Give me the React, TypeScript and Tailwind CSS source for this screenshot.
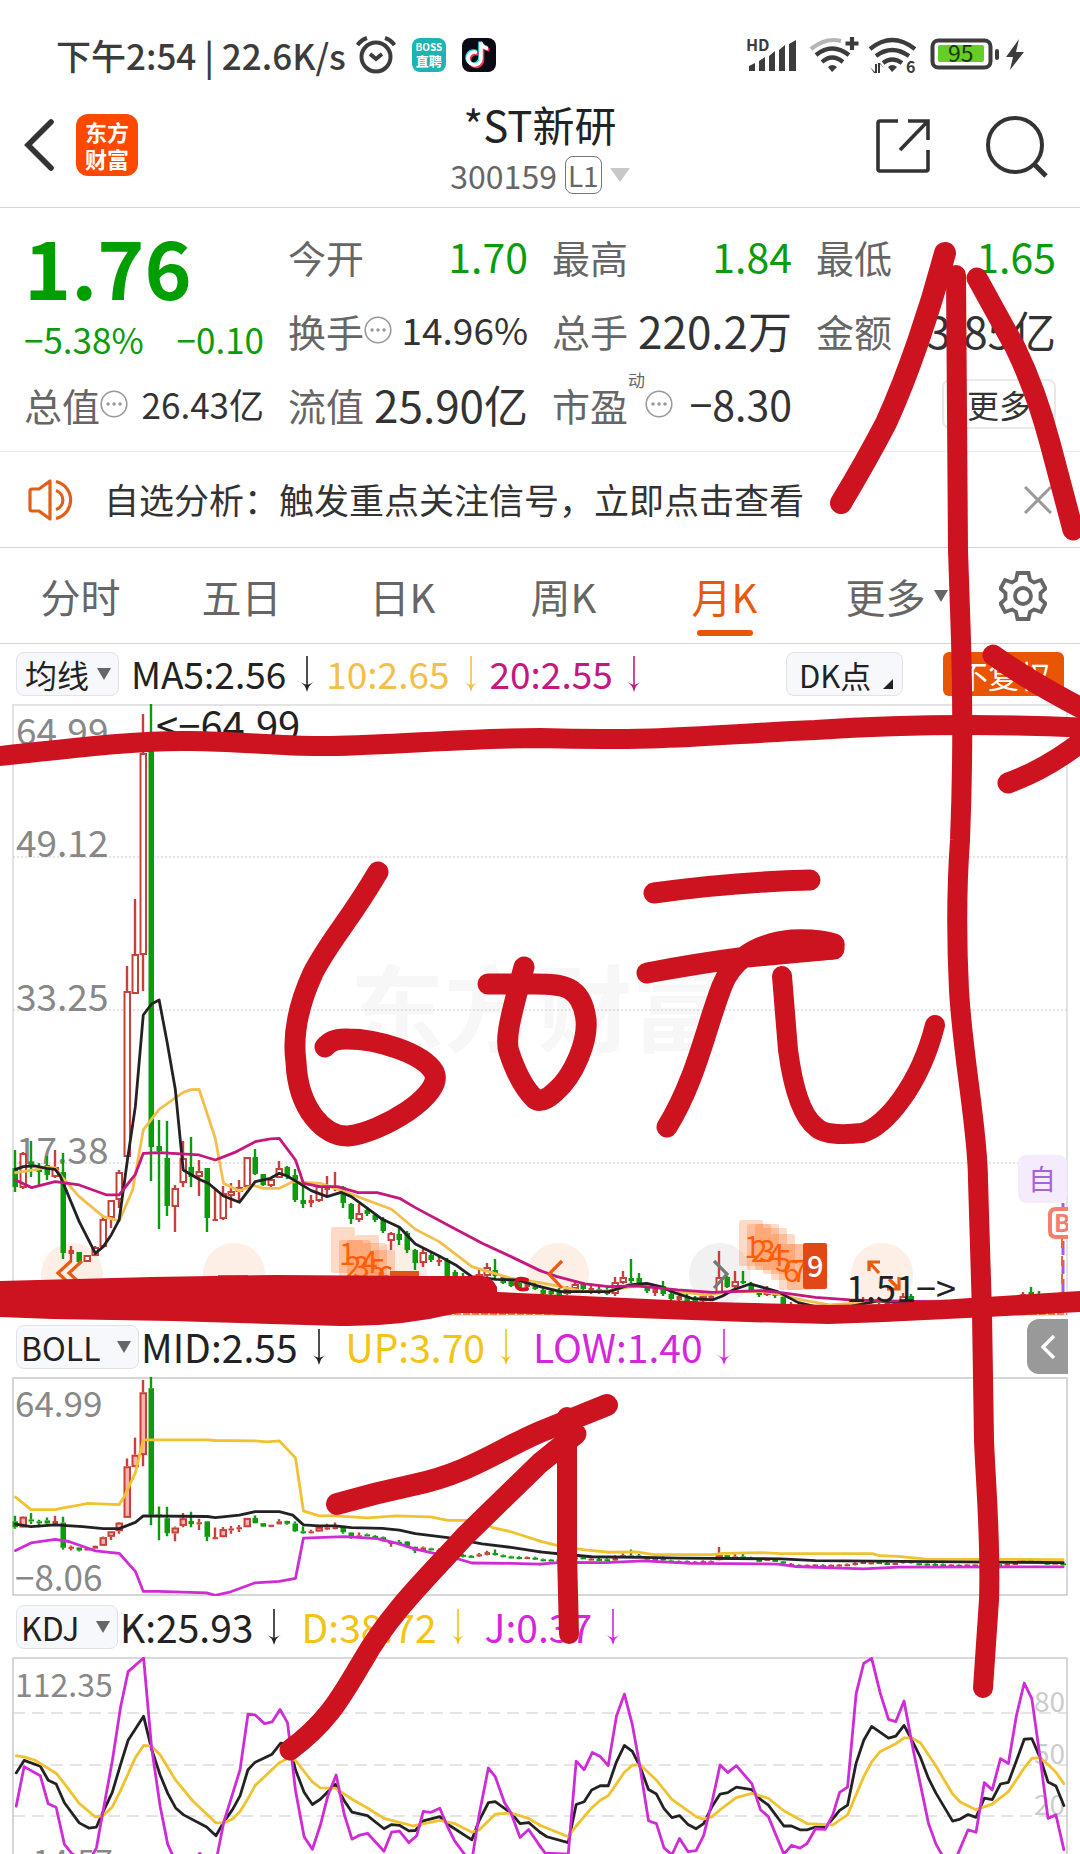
import type { ReactNode } from 'react';

type Candle = [number, number, number, number, 'r' | 'g'];

const RED = '#c9403a';
const GREEN = '#0a9c0a';

// high, body top, body bottom, low (in chart units), direction
const candles: Candle[] = [
  [446, 464, 483, 488, 'g'], [448, 449, 484, 485, 'r'], [437, 458, 463, 473, 'g'], [459, 464, 468, 483, 'g'],
  [452, 461, 471, 476, 'g'], [446, 463, 473, 474, 'r'], [449, 468, 549, 555, 'g'], [542, 546, 550, 558, 'r'],
  [548, 548, 558, 561, 'g'], [551, 551, 558, 558, 'r'], [542, 543, 552, 552, 'r'], [513, 515, 543, 543, 'r'],
  [496, 496, 514, 524, 'r'], [466, 468, 496, 504, 'r'], [262, 287, 453, 453, 'r'], [195, 250, 290, 290, 'r'],
  [10, 49, 251, 287, 'r'], [0, 36, 443, 477, 'g'], [416, 442, 447, 525, 'g'], [417, 454, 502, 512, 'g'],
  [481, 484, 503, 528, 'r'], [437, 454, 479, 483, 'r'], [433, 463, 473, 483, 'g'], [456, 467, 473, 492, 'r'],
  [464, 464, 514, 528, 'g'], [484, 515, 516, 517, 'r'], [482, 489, 515, 516, 'r'], [479, 487, 492, 504, 'r'],
  [476, 483, 488, 498, 'r'], [453, 453, 483, 483, 'r'], [445, 453, 470, 471, 'g'], [470, 470, 481, 482, 'g'],
  [475, 475, 482, 483, 'r'], [457, 464, 474, 474, 'r'], [462, 463, 472, 475, 'g'], [465, 471, 496, 498, 'g'],
  [481, 496, 500, 504, 'g'], [491, 496, 499, 503, 'r'], [481, 482, 497, 498, 'r'], [472, 484, 486, 492, 'r'],
  [468, 483, 485, 487, 'r'], [482, 483, 499, 504, 'g'], [499, 500, 515, 520, 'g'], [500, 509, 516, 518, 'r'],
  [503, 506, 510, 512, 'g'], [509, 511, 516, 518, 'g'], [513, 515, 527, 529, 'g'], [528, 529, 537, 546, 'r'],
  [524, 530, 536, 541, 'g'], [527, 529, 546, 549, 'g'], [545, 546, 559, 566, 'g'], [545, 548, 559, 563, 'r'],
  [549, 551, 556, 558, 'g'], [551, 556, 558, 562, 'r'], [554, 556, 573, 575, 'g'], [566, 568, 576, 578, 'g'],
  [569, 572, 578, 580, 'g'], [572, 575, 580, 581, 'g'], [566, 570, 577, 579, 'r'], [559, 563, 572, 574, 'r'],
  [555, 566, 572, 574, 'g'], [571, 573, 579, 580, 'g'], [575, 577, 582, 583, 'g'], [576, 579, 584, 586, 'g'],
  [577, 579, 583, 585, 'r'], [578, 581, 585, 586, 'g'], [584, 586, 590, 591, 'g'], [585, 587, 590, 593, 'g'],
  [584, 586, 591, 592, 'g'], [582, 585, 590, 591, 'r'], [576, 580, 585, 587, 'r'], [578, 580, 585, 587, 'g'],
  [581, 584, 588, 590, 'r'], [582, 585, 588, 590, 'g'], [583, 586, 590, 591, 'g'], [573, 578, 590, 592, 'r'],
  [567, 573, 579, 580, 'r'], [555, 574, 577, 579, 'g'], [569, 574, 580, 581, 'g'], [579, 581, 587, 589, 'g'],
  [582, 585, 589, 592, 'r'], [577, 582, 590, 592, 'g'], [588, 590, 595, 597, 'g'], [590, 592, 596, 597, 'r'],
  [590, 592, 597, 598, 'g'], [592, 594, 598, 599, 'g'], [589, 592, 597, 598, 'r'], [590, 592, 596, 597, 'r'],
  [547, 573, 589, 590, 'r'], [572, 573, 583, 584, 'g'], [567, 577, 583, 584, 'r'], [567, 577, 579, 580, 'g'],
  [578, 581, 587, 588, 'g'], [586, 588, 591, 593, 'g'], [582, 585, 591, 592, 'r'], [586, 588, 592, 594, 'g'],
  [592, 593, 600, 601, 'g'], [598, 601, 606, 607, 'r'], [602, 604, 607, 608, 'g'], [602, 604, 607, 608, 'r'],
  [601, 603, 607, 608, 'r'], [602, 605, 608, 609, 'g'], [602, 604, 608, 609, 'r'], [601, 603, 606, 607, 'r'],
  [600, 602, 605, 606, 'r'], [596, 598, 604, 606, 'r'], [593, 595, 598, 600, 'r'], [594, 596, 598, 600, 'r'],
  [594, 595, 599, 600, 'g'], [596, 598, 601, 602, 'g'], [597, 598, 601, 602, 'r'], [589, 592, 598, 600, 'r'],
  [590, 592, 598, 600, 'g'], [597, 599, 602, 603, 'g'], [598, 600, 603, 604, 'g'], [599, 601, 604, 605, 'g'],
  [600, 602, 605, 606, 'g'], [601, 603, 606, 607, 'r'], [602, 604, 607, 608, 'g'], [601, 603, 606, 607, 'r'],
  [601, 603, 606, 607, 'r'], [602, 604, 606, 607, 'g'], [601, 603, 606, 607, 'r'], [600, 602, 605, 606, 'g'],
  [598, 600, 603, 604, 'r'], [595, 598, 602, 603, 'r'], [588, 590, 594, 596, 'r'], [583, 588, 592, 594, 'g'],
  [587, 590, 594, 596, 'g'], [594, 597, 600, 602, 'g'], [594, 597, 602, 604, 'r'], [597, 599, 604, 606, 'g'],
];

const ma5 = [
  '45,988 68,980 100,978 136,985 160,988 175,1008 230,1145 277,1240 300,1220 323,1185 346,1140 370,960 393,800 416,525 440,492 462,480 485,605 509,748 532,990 578,1018 605,1030 649,1068 695,1087 741,1025 785,1015 811,1000 834,1008 904,1052 950,1070 990,1057 1020,1070 1067,1105 1110,1138 1160,1162 1206,1212 1275,1248 1323,1275 1370,1310 1440,1318 1500,1320 1568,1340',
  '0,1340 60,1355 200,1355 260,1335 310,1330 350,1340 390,1358 440,1375 500,1380 530,1368 560,1350 610,1332 690,1355 750,1388 800,1400 900,1400 980,1383 1060,1388 1250,1385',
];
const ma10 = [
  '45,998 100,990 136,982 160,984 183,1015 230,1070 300,1130 346,1143 385,1050 416,870 462,808 532,757 555,749 578,748 625,895 649,1030 695,1053 735,1036 765,1045 811,1045 850,1025 930,1030 1000,1055 1090,1090 1137,1108 1206,1168 1275,1205 1370,1280 1484,1315 1568,1328',
  '0,1328 60,1340 130,1355 200,1352 264,1340 330,1338 400,1355 480,1365 560,1355 650,1355 700,1365 760,1380 840,1395 980,1385 1180,1383',
];
const ma20 = [
  '45,1020 92,1043 160,1025 230,1035 310,1065 346,1065 393,1003 416,940 462,938 578,945 625,960 680,938 741,905 785,897 811,895 858,960 881,1030 930,1040 980,1040 1040,1058 1095,1058 1160,1075 1206,1103 1300,1155 1400,1210 1484,1250 1568,1292',
  '0,1292 50,1310 130,1332 200,1340 280,1338 400,1350 500,1357 640,1352 700,1358 800,1372 900,1380 1000,1383 1180,1386',
];
const bollUp = [
  '45,540 90,576 160,576 183,571 230,563 254,558 346,562 360,540 393,470 416,375 602,375 625,377 741,378 775,381 811,378 858,427 881,580 927,594 974,594 1067,600 1150,594 1250,597 1300,607 1350,607 1400,612 1430,628 1484,640 1568,667',
  '0,667 60,682 130,692 200,699 280,698 330,706 500,706 530,702 640,700 700,703 965,703 985,709 1040,711 1120,719 1519,720',
];
const bollMid = [
  '45,618 90,625 160,620 240,625 300,631 346,631 393,613 416,594 602,596 625,599 695,592 741,582 811,582 850,592 881,620 925,623 974,623 1020,628 1110,630 1160,635 1206,645 1300,657 1400,675 1484,685 1568,698',
  '0,698 60,704 150,712 300,714 400,716 700,718 800,723 1519,729',
];
const bollLow = [
  '45,694 90,672 160,662 200,668 277,695 346,702 393,754 416,812 460,812 600,816 625,823 670,813 741,787 811,783 858,774 881,658 1000,654 1095,660 1160,675 1206,690 1320,715 1370,730 1484,731 1568,733',
  '0,733 60,728 190,729 300,724 440,731 690,733 740,740 850,744 940,747 1040,742 1519,741',
];
const kLine = [
  '47,1334 70,1298 117,1315 140,1355 163,1366 187,1420 230,1478 258,1493 280,1490 300,1445 326,1390 350,1310 372,1240 417,1171 440,1265 465,1340 487,1393 510,1435 533,1455 600,1490 627,1515 650,1475 675,1440 697,1400 720,1325 741,1303 790,1280 815,1248 840,1252 858,1325 883,1390 907,1425 930,1410 974,1367 1000,1415 1022,1447 1067,1457 1115,1495 1137,1483 1160,1485 1187,1501 1206,1500 1229,1472 1277,1460 1300,1482 1370,1527 1392,1470 1418,1420 1438,1417 1484,1450 1510,1480 1535,1477 1568,1505',
  '0,1505 20,1518 82,1535 105,1425 128,1417 150,1383 175,1371 198,1371 222,1302 245,1255 268,1272 290,1315 315,1382 338,1395 360,1437 383,1463 405,1457 430,1483 453,1495 475,1480 500,1430 523,1395 545,1391 570,1375 615,1382 640,1410 663,1427 708,1487 730,1487 755,1498 775,1498 800,1490 830,1490 870,1442 893,1427 918,1305 940,1240 963,1200 1012,1234 1033,1228 1057,1197 1080,1240 1105,1290 1128,1350 1150,1393 1198,1473 1220,1467 1243,1454 1266,1462 1290,1407 1313,1411 1337,1366 1360,1361 1383,1300 1406,1237 1428,1235 1452,1290 1475,1360 1498,1372 1521,1428',
];
const dLine = [
  '47,1285 70,1288 100,1297 163,1335 187,1365 230,1422 277,1461 300,1457 326,1432 350,1385 393,1290 417,1255 440,1257 465,1282 510,1355 560,1415 627,1478 650,1478 675,1467 697,1445 720,1408 741,1370 811,1305 840,1290 860,1300 883,1330 907,1360 930,1377 974,1378 1022,1410 1067,1435 1115,1465 1200,1487 1277,1471 1320,1480 1370,1505 1392,1498 1438,1453 1484,1450 1535,1465 1568,1485',
  '0,1485 82,1518 105,1487 150,1435 175,1413 198,1400 245,1332 268,1312 290,1310 338,1355 383,1410 453,1460 475,1467 500,1460 523,1440 570,1405 615,1393 663,1407 708,1443 775,1480 850,1484 870,1470 893,1455 940,1345 963,1302 988,1272 1033,1250 1057,1233 1080,1233 1105,1248 1150,1315 1198,1395 1220,1418 1266,1440 1313,1424 1360,1388 1406,1320 1428,1292 1452,1290 1475,1310 1498,1332 1521,1365',
];
const jLine = [
  '47,1430 70,1316 117,1342 140,1423 163,1433 187,1540 210,1568 258,1590 280,1550 300,1440 326,1300 350,1145 372,1042 417,1003 440,1260 465,1430 487,1540 510,1590 560,1590 580,1566 600,1590 627,1590 650,1475 697,1325 720,1165 741,1167 768,1192 790,1187 813,1151 835,1190 858,1385 883,1518 907,1554 930,1485 952,1400 976,1340 1000,1455 1022,1525 1045,1513 1067,1508 1115,1560 1137,1505 1160,1502 1187,1535 1210,1515 1229,1445 1250,1448 1277,1436 1300,1490 1320,1530 1350,1570 1372,1575 1392,1450 1418,1320 1438,1345 1465,1420 1484,1450 1510,1520 1535,1497 1568,1545',
  '0,1545 15,1565 82,1568 105,1300 128,1325 152,1275 175,1287 198,1313 222,1170 245,1107 268,1195 290,1315 315,1472 338,1480 360,1550 383,1570 405,1523 430,1561 453,1558 475,1515 500,1415 523,1311 545,1333 570,1313 615,1365 640,1440 663,1460 708,1568 730,1543 755,1551 775,1538 800,1495 828,1497 850,1455 870,1390 893,1375 918,1105 940,1018 963,1004 988,1105 1012,1180 1033,1186 1057,1127 1080,1250 1105,1370 1128,1480 1150,1540 1170,1575 1210,1575 1243,1498 1266,1505 1290,1362 1313,1383 1337,1293 1360,1307 1383,1170 1406,1075 1428,1120 1452,1290 1475,1465 1498,1455 1521,1555',
];

const Curve = ({ points, color }: { points: string[]; color: string }) => (
  <g fill="none" stroke={color} strokeWidth="2.8" strokeLinejoin="round" strokeLinecap="round">
    <polyline points={points[0]} vectorEffect="non-scaling-stroke" />
    <polyline points={points[1]} transform="translate(1568 0)" vectorEffect="non-scaling-stroke" />
  </g>
);

const Candles = ({ scale = 1 }: { scale?: number }) => (
  <g>
    {candles.map(([high, top, bottom, low, dir], i) => {
      const x = 3 + i * 8;
      const color = dir === 'r' ? RED : GREEN;
      const y = top * scale;
      const h = Math.max((bottom - top) * scale, 2);
      return (
        <g key={i}>
          <path d={`M${x} ${high * scale}V${y}M${x} ${y + h}V${low * scale}`} stroke={color} strokeWidth="2.4" />
          {dir === 'r' && h > 4 ? (
            <rect x={x - 2.5} y={y + 1} width="5.5" height={h - 2} fill={scale < 1 ? '#f7b3ae' : '#fff'} stroke={color} strokeWidth="2" />
          ) : (
            <rect x={x - 2.5} y={y} width="5.5" height={h} fill={color} />
          )}
        </g>
      );
    })}
  </g>
);

const DownArrow = () => (
  <svg viewBox="0 0 14 36" className="w-3.5 h-9 shrink-0" aria-hidden="true">
    <path d="M7 0V30" stroke="currentColor" strokeWidth="1.6" />
    <path d="M0 26Q5 28 7 36Q9 28 14 26Q10 28 7 29Q4 28 0 26Z" fill="currentColor" />
  </svg>
);

const Readings = ({ items, className }: { items: [string, string][]; className: string }) => (
  <div className={`flex items-center whitespace-nowrap ${className}`}>
    {items.map(([text, color]) => (
      <span key={text} className={`flex items-center gap-3.5 ${color}`}>
        {text}
        <DownArrow />
      </span>
    ))}
  </div>
);

const Picker = ({ label, value, className, pad = 'pl-1' }: { label: string; value: string; className: string; pad?: string }) => (
  <div className={`relative h-11 shrink-0 ${className}`}>
    <select
      aria-label={label}
      defaultValue={value}
      className={`size-full appearance-none rounded-lg border border-[#dfe2e6] bg-[#f6f8fb] text-[32px] leading-10 text-[#222] ${pad}`}
    >
      <option>{value}</option>
    </select>
    <svg viewBox="0 0 14 12" className="pointer-events-none absolute right-2 top-4 h-3 w-3.5" aria-hidden="true">
      <path d="M0 0H14L7 12Z" fill="#666" />
    </svg>
  </div>
);

const Info = () => (
  <svg viewBox="0 0 28 28" className="size-7 shrink-0" fill="none" stroke="#999" strokeWidth="1.6" aria-hidden="true">
    <circle cx="14" cy="14" r="12.8" />
    <path d="M8 14h.1M14 14h.1M20 14h.1" strokeWidth="3.4" strokeLinecap="round" />
  </svg>
);

const Stat = ({ label, value, size, extra }: { label: string; value: string; size: string; extra?: ReactNode }) => (
  <div className="flex h-[74px] items-center justify-between whitespace-nowrap">
    <dt className="flex items-center text-[38px] text-[#666]">
      {label}
      {extra}
    </dt>
    <dd className={size}>{value}</dd>
  </div>
);

const StatusBar = () => (
  <div className="flex h-[110px] items-center justify-between pl-14 pr-[54px] text-[#3c3c3c]">
    <div className="flex items-center">
      <span className="text-[35px] leading-[46px] font-medium whitespace-nowrap">下午2:54 | 22.6K/s</span>
      <svg viewBox="0 0 40 38" className="ml-2.5 h-[38px] w-10" fill="none" stroke="currentColor" strokeWidth="4" aria-hidden="true">
        <circle cx="20" cy="21" r="14.5" />
        <path d="M1.500 9Q5 4 11 2M38.500 9Q35 4 29 2" />
        <path d="M14 18L20 23L26 18" />
      </svg>
      <span className="ml-4 flex size-[34px] flex-col items-center justify-center rounded-lg bg-[#1fb3b1] font-bold text-white">
        <span className="text-[10px] leading-3">BOSS</span>
        <span className="text-[13px] leading-4">直聘</span>
      </span>
      <svg viewBox="0 0 34 34" className="ml-4 size-[34px]" fill="none" strokeWidth="3.6" aria-hidden="true">
        <rect width="34" height="34" rx="8" fill="#0b0b16" />
        <path d="M15 14.500a6.500 6.500 0 1 0 4 6V4.500q1 5 7 6" stroke="#25e5e0" transform="translate(-1 -1)" />
        <path d="M15 14.500a6.500 6.500 0 1 0 4 6V4.500q1 5 7 6" stroke="#f3325a" transform="translate(1.500 1.500)" />
        <path d="M15 14.500a6.500 6.500 0 1 0 4 6V4.500q1 5 7 6" stroke="#fff" />
      </svg>
    </div>
    <svg viewBox="0 0 280 38" className="h-[38px] w-[280px] overflow-visible" fill="currentColor" aria-label="信号 电量 95">
      <text x="0" y="15" fontSize="16" fontWeight="700">HD</text>
      <path d="M3 35V30L9 27V35ZM13 35V25L19 21V35ZM23 35V20L29 15V35ZM33 35V14L39 9V35ZM43 35V8L50 4V35Z" />
      <g fill="none" stroke="currentColor" strokeWidth="4.200">
        <path d="M65 13Q80 1 95 5" stroke="#b5b5b5" />
        <path d="M70 19Q86 6 103 19M76 26Q86 17 97 26" />
        <path d="M106 1V14M99.500 7.500H112.500" />
        <path d="M124 13Q146 -5 169 13M130 20Q146 8 163 20M137 27Q146 20 156 27" />
      </g>
      <path d="M82 31Q86 27 91 31L86 36ZM142 31Q146 27 151 31L146 36Z" />
      <path d="M124 31L129 36V28H131V37H128ZM138 32L134 28V37H132V27H134Z" />
      <text x="160" y="37" fontSize="16" fontWeight="700">6</text>
      <rect x="186.500" y="4.500" width="58" height="27" rx="6" fill="none" stroke="currentColor" strokeWidth="4" />
      <rect x="192" y="9" width="46" height="17" rx="2" fill="#66cc26" />
      <text x="202" y="26" fontSize="23" fill="#173a0a">95</text>
      <rect x="249" y="13" width="4" height="11" rx="2" />
      <path d="M273 3L260 21H267L264 34L278 16H270Z" />
    </svg>
  </div>
);

const Header = () => (
  <header className="flex h-[98px] items-start justify-between border-b border-[#d4d4d4] px-6">
    <div className="flex w-64 items-center gap-[22px] pt-1">
      <button type="button" aria-label="返回">
        <svg viewBox="0 0 30 52" className="h-[52px] w-[30px]" fill="none" stroke="#333" strokeWidth="5.600">
          <path d="M27 3L4 26L27 49" strokeLinecap="round" />
        </svg>
      </button>
      <a href="#home" className="flex size-[62px] flex-col items-center justify-center rounded-xl bg-[#ff4800] text-[22px] leading-[27px] font-bold text-white">
        <span>东方</span>
        <span>财富</span>
      </a>
    </div>
    <div className="-mt-2.5 text-center">
      <h1 className="text-[42px] leading-[48px] text-[#222]">*ST新研</h1>
      <button type="button" className="flex items-center gap-2 text-[32px] leading-[54px] text-[#666]">
        300159
        <span className="rounded-lg border border-[#777] px-0.5 text-[28px] leading-9">L1</span>
        <svg viewBox="0 0 20 14" className="h-3.5 w-5" aria-hidden="true">
          <path d="M0 0H20L10 14Z" fill="#c8c8c8" />
        </svg>
      </button>
    </div>
    <div className="flex w-64 items-center justify-end gap-14 pr-2 pt-1">
      <button type="button" aria-label="分享">
        <svg viewBox="0 0 54 54" className="size-[54px]" fill="none" stroke="#333" strokeWidth="3.600">
          <path d="M22 2H4Q2 2 2 4V50Q2 52 4 52H50Q52 52 52 50V31M32 2H52V21M52 2L24 31" />
        </svg>
      </button>
      <button type="button" aria-label="搜索">
        <svg viewBox="0 0 62 64" className="h-16 w-[62px]" fill="none" stroke="#333" strokeWidth="4">
          <circle cx="29" cy="31" r="27" />
          <path d="M48 50L60 62" strokeWidth="5" />
        </svg>
      </button>
    </div>
  </header>
);

const Quote = () => (
  <section className="border-b border-[#ebebeb] pt-[11px] pb-2.5">
    <dl className="grid grid-cols-4 gap-x-6 px-6 text-[#333]">
      <div>
        <div className="flex h-[92px] items-center text-[80px] leading-none font-bold text-[#009e00]">1.76</div>
        <div className="flex h-14 items-center justify-between whitespace-nowrap text-[35px] text-[#0a9c0a]">
          <span>−5.38%</span>
          <span>−0.10</span>
        </div>
        <Stat label="总值" value="26.43亿" size="text-[35px]" extra={<Info />} />
      </div>
      <div>
        <Stat label="今开" value="1.70" size="text-[41px] text-[#0a9c0a]" />
        <Stat label="换手" value="14.96%" size="text-[37px]" extra={<Info />} />
        <Stat label="流值" value="25.90亿" size="text-[44px]" />
      </div>
      <div>
        <Stat label="最高" value="1.84" size="text-[41px] text-[#0a9c0a]" />
        <Stat label="总手" value="220.2万" size="text-[44px]" />
        <Stat
          label="市盈"
          value="−8.30"
          size="text-[41px]"
          extra={
            <>
              <sup className="mb-8 text-[17px] leading-none">动</sup>
              <Info />
            </>
          }
        />
      </div>
      <div>
        <Stat label="最低" value="1.65" size="text-[41px] text-[#0a9c0a]" />
        <Stat label="金额" value="3.85亿" size="text-[44px]" />
        <div className="flex h-[74px] items-center justify-end">
          <button type="button" className="h-[50px] w-[114px] rounded-lg border-2 border-[#e8e8e8] text-[32px] leading-none">更多</button>
        </div>
      </div>
    </dl>
  </section>
);

const Notice = () => (
  <section className="flex h-24 items-center border-b border-[#d4d4d4] pl-7 pr-7 text-[#333]">
    <svg viewBox="0 0 48 42" className="h-[42px] w-12" fill="none" stroke="#e06018" strokeWidth="3.200" strokeLinejoin="round" aria-hidden="true">
      <path d="M22 2V40L11 32H4Q2 32 2 30V12Q2 10 4 10H11Z" />
      <path d="M28 2.500A19 19 0 0 1 28 39.500M28 11.500A10 10 0 0 1 28 30.500" />
    </svg>
    <a href="#signal" className="ml-7 flex-1 whitespace-nowrap text-[35px]">自选分析：触发重点关注信号，立即点击查看</a>
    <button type="button" aria-label="关闭">
      <svg viewBox="0 0 28 28" className="size-7" stroke="#999" strokeWidth="3">
        <path d="M1 1L27 27M27 1L1 27" />
      </svg>
    </button>
  </section>
);

const Tabs = () => (
  <nav className="flex h-24 items-stretch border-b border-[#d4d4d4] text-[40px] text-[#666]">
    {['分时', '五日', '日K', '周K', '月K', '更多'].map((tab) => (
      <button
        key={tab}
        type="button"
        className={`relative flex flex-1 items-center justify-center ${tab === '月K' ? 'text-[#e8590c]' : ''}`}
      >
        {tab}
        {tab === '月K' && <span className="absolute bottom-[7px] h-1.5 w-14 rounded-full bg-[#e85505]" />}
        {tab === '更多' && (
          <svg viewBox="0 0 14 12" className="absolute right-[18px] h-3 w-3.5" aria-hidden="true">
            <path d="M0 0H14L7 12Z" fill="#666" />
          </svg>
        )}
      </button>
    ))}
    <button type="button" aria-label="设置" className="flex w-[114px] items-center justify-center">
      <svg viewBox="0 0 48 50" className="h-[50px] w-12" fill="none" stroke="#666" strokeWidth="3.800">
        <path d="M18.500 2H29.500L31 9L35 11.500L42 9L46.500 17.500L41.500 22V28L46.500 32.500L42 41L35 38.500L31 41L29.500 48H18.500L17 41L13 38.500L6 41L1.500 32.500L6.500 28V22L1.500 17.500L6 9L13 11.500L17 9Z" />
        <circle cx="24" cy="25" r="8" />
      </svg>
    </button>
  </nav>
);

const Stamp = ({ x, y, n, dx }: { x: number; y: number; n: string; dx: number }) => (
  <g>
    <rect x={x} y={y} width="24" height="46" rx="2" fill="#ff6a1a" fillOpacity=".25" />
    <text x={x + dx} y={y + 38} fontSize="30" fill="#ff5a00">{n}</text>
  </g>
);

const MainChart = () => (
  <svg viewBox="0 0 1056 612" className="block w-full" role="img" aria-label="月K线图">
    <text x="338" y="341" fontSize="94" fontWeight="700" fill="#f7f7f7">东方财富</text>
    <rect x="1" y="1" width="1054" height="610" fill="none" stroke="#e2e2e2" strokeWidth="2" />
    <path d="M1 153H1055M1 306H1055M1 459H1055" stroke="#ccc" strokeWidth="1" strokeDasharray="2 2" />
    <path d="M1 610H1055" stroke="#e8834a" strokeWidth="2" strokeDasharray="7 2" />
    <g fill="#888" fontSize="37">
      <text x="4" y="41">64.99</text>
      <text x="4" y="153">49.12</text>
      <text x="4" y="307">33.25</text>
      <text x="4" y="460">17.38</text>
    </g>
    {[60, 222, 384, 546, 870].map((x) => (
      <circle key={x} cx={x} cy="570" r="31" fill="#fdeee6" />
    ))}
    <circle cx="708" cy="570" r="31" fill="#f1f1f1" />
    <Candles />
    <g transform="translate(-12 136) scale(.3444 .3333)">
      <Curve points={ma10} color="#f3bf4c" />
      <Curve points={ma5} color="#222" />
      <Curve points={ma20} color="#c5187f" />
    </g>
    <g fill="none" stroke="#ea5a10" strokeWidth="3.200">
      <path d="M59 557L46 569L59 581M70 557L57 569L70 581M550 557L537 570L550 584" />
      <path d="M206 573H236" strokeWidth="4" />
      <path d="M857 567V558H868M857 558L867 569M877 575L887 585M887 573V585H875" />
      <path d="M702 557L715 570L702 584" stroke="#777" />
    </g>
    <Stamp x={319} y={523} n="1" dx={8} />
    <Stamp x={327} y={536} n="2" dx={6} />
    <Stamp x={335} y={536} n="3" dx={6} />
    <Stamp x={343} y={531} n="4" dx={6} />
    <Stamp x={351} y={539} n="5" dx={6} />
    <Stamp x={359} y={546} n="6" dx={6} />
    <rect x="378" y="567" width="29" height="40" fill="#e05510" />
    <Stamp x={727} y={516} n="1" dx={5} />
    <Stamp x={735} y={520} n="2" dx={4} />
    <Stamp x={743} y={520} n="3" dx={4} />
    <Stamp x={751} y={524} n="4" dx={5} />
    <Stamp x={759} y={530} n="5" dx={4} />
    <Stamp x={767} y={540} n="6" dx={4} />
    <Stamp x={775} y={540} n="7" dx={4} />
    <rect x="791" y="539" width="24" height="46" rx="2" fill="#e24815" />
    <text x="795" y="573" fontSize="29" fontWeight="500" fill="#fff">9</text>
    <text x="144" y="37" fontSize="40" fill="#222">&lt;−64.99</text>
    <text x="834" y="598" fontSize="36" fill="#222">1.51−&gt;</text>
    <path d="M1051 499V608" stroke="#a15ce0" strokeWidth="3" strokeDasharray="14 5" />
    <path d="M1050 534V608" stroke="#f0653c" strokeWidth="2" strokeDasharray="10 8" />
    <rect x="1006" y="451" width="49" height="48" rx="8" fill="#f4ecfd" />
    <text x="1016" y="486" fontSize="28" fill="#a463d6">自</text>
    <path d="M1056 505H1044Q1038 505 1038 511V527Q1038 533 1044 533H1056" fill="#fff" stroke="#f57f6e" strokeWidth="4" />
    <text x="1042" y="528" fontSize="24" fontWeight="700" fill="#f57f6e">B</text>
  </svg>
);

const BollChart = () => (
  <svg viewBox="0 0 1056 219" className="block w-full" role="img" aria-label="BOLL">
    <rect x="1" y="1" width="1054" height="217" fill="none" stroke="#ccc" strokeWidth="1.600" />
    <Candles scale={0.311} />
    <g transform="translate(-12 -67.300) scale(.3444 .347)">
      <Curve points={bollUp} color="#f0c22e" />
      <Curve points={bollMid} color="#222" />
      <Curve points={bollLow} color="#cf2bd6" />
    </g>
    <g fill="#888" fontSize="35">
      <text x="3" y="40">64.99</text>
      <text x="3" y="214">−8.06</text>
    </g>
  </svg>
);

const KdjChart = () => (
  <svg viewBox="0 0 1056 197" className="block w-full" role="img" aria-label="KDJ">
    <path d="M1 197V1H1055V197" fill="none" stroke="#ccc" strokeWidth="1.600" />
    <path d="M1 56H1055M1 108H1055M1 159H1055" stroke="#ccc" strokeWidth="1.200" strokeDasharray="12 7" />
    <g fill="#888" fontSize="32">
      <text x="3" y="40">112.35</text>
      <text x="3" y="217">−14.57</text>
    </g>
    <g fill="#ccc" fontSize="28">
      <text x="1022" y="55">80</text>
      <text x="1022" y="107">50</text>
      <text x="1022" y="158">20</text>
    </g>
    <g transform="translate(-12 -347) scale(.3444 .347)">
      <Curve points={kLine} color="#222" />
      <Curve points={dLine} color="#f0c22e" />
      <Curve points={jLine} color="#cf2bd6" />
    </g>
  </svg>
);

// Hand drawn notes over the page
const Ink = () => (
  <svg viewBox="0 0 1080 1854" className="pointer-events-none absolute inset-x-0 top-0 w-full" aria-hidden="true">
    <g fill="none" stroke="#cd1320" strokeWidth="21" strokeLinecap="round" strokeLinejoin="round">
      <path d="M945 253C930 310 908 375 886 423C872 450 856 478 841 503" strokeWidth="22" />
      <path d="M956 275L958 550L961 640Q964 740 960 840Q955 910 959 990C963 1060 978 1130 978 1180L982 1313L984 1440C986 1490 991 1540 989 1600L983 1688" strokeWidth="20" />
      <path d="M977 278L1015 347Q1036 390 1050 443L1073 530" />
      <path d="M-10 757C60 750 130 740 190 741C240 741 280 747 330 746C400 745 460 738 540 738C660 742 720 734 815 730Q950 721 1090 728" strokeWidth="20" />
      <path d="M993 655Q1035 685 1095 715M1008 783Q1050 768 1090 735" />
      <path d="M378 872C350 920 330 940 313 973C296 1010 293 1040 296 1062C298 1110 325 1137 348 1136C380 1133 445 1095 434 1072C422 1052 375 1039 348 1039Q332 1038 325 1047" />
      <path d="M524 967L517 993C510 1020 505 1040 509 1052Q520 1085 535 1099Q542 1104 555 1092C575 1075 588 1040 586 1020C582 985 562 984 535 984H488" />
      <path d="M654 893Q733 882 810 880M647 973Q700 963 747 957L832 949M834 944Q820 939 792 940C750 944 730 965 722 986C706 1027 696 1080 667 1127" />
      <path d="M750 955L790 942L834 945V949L780 953" />
      <path d="M782 976L788 1050C792 1080 800 1115 816 1127Q825 1137 862 1133C885 1127 920 1085 935 1025" strokeWidth="20" />
      <path d="M337 1504Q375 1493 413 1485C470 1473 500 1449 540 1432L607 1405" strokeWidth="22" />
      <path d="M290 1750C330 1720 342 1695 362 1662C390 1612 430 1575 465 1536L540 1463L576 1434" />
      <path d="M567 1417V1553L569 1634" strokeWidth="20" />
      <path d="M527 1280Q516 1276 516 1284Q517 1291 527 1289" strokeWidth="4" />
    </g>
    <path
      d="M0 1281L152 1277L276 1275L413 1276L480 1276Q492 1276 497 1287V1292L540 1294L626 1298L712 1302L829 1305L884 1304L970 1298L1080 1291V1312L988 1317L884 1322L829 1324L747 1322L609 1317L540 1314L458 1313Q400 1327 340 1326L172 1321L52 1319L0 1317Z"
      fill="#cd1320"
    />
  </svg>
);

export default function App() {
  return (
    <main className="relative w-full overflow-hidden bg-white font-['Noto_Sans_CJK_SC',sans-serif]">
      <StatusBar />
      <Header />
      <Quote />
      <Notice />
      <Tabs />
      <div className="flex h-[60px] items-center pl-4 pr-4">
        <Picker label="指标" value="均线" className="w-[103px]" pad="pl-2" />
        <Readings
          className="ml-3 flex-1 gap-3 text-[37px]"
          items={[['MA5:2.56', 'text-[#222]'], ['10:2.65', 'text-[#f3bf4c]'], ['20:2.55', 'text-[#c5187f]']]}
        />
        <button type="button" className="flex h-11 w-[117px] items-center rounded-lg border border-[#dfe2e6] bg-[#f6f8fb] pl-3 text-[31px] leading-none whitespace-nowrap text-[#222]">
          DK点
          <svg viewBox="0 0 10 10" className="ml-3 mt-5 size-2.5" aria-hidden="true">
            <path d="M10 0V10H0Z" fill="#222" />
          </svg>
        </button>
        <button type="button" className="ml-10 h-11 w-[121px] rounded-md bg-[#e85505] text-[31px] leading-none text-white">不复权</button>
      </div>
      <div className="px-3">
        <MainChart />
      </div>
      <div className="flex h-[61px] items-center pl-4 pr-3">
        <Picker label="副图一" value="BOLL" className="w-[123px]" />
        <Readings
          className="ml-0.5 flex-1 gap-5 text-[39px]"
          items={[['MID:2.55', 'text-[#222]'], ['UP:3.70', 'text-[#f3c316]'], ['LOW:1.40', 'text-[#d427dc]']]}
        />
        <button type="button" aria-label="展开" className="flex h-[55px] w-[41px] items-center justify-center rounded-l-xl bg-[#999]">
          <svg viewBox="0 0 14 24" className="h-6 w-3.5" fill="none" stroke="#fff" strokeWidth="3.400">
            <path d="M13 1L2 12L13 23" />
          </svg>
        </button>
      </div>
      <div className="px-3">
        <BollChart />
      </div>
      <div className="flex h-[61px] items-center pl-4 pr-3">
        <Picker label="副图二" value="KDJ" className="w-[102px]" />
        <Readings
          className="ml-0.5 gap-5 text-[39px]"
          items={[['K:25.93', 'text-[#222]'], ['D:38.72', 'text-[#f3c316]'], ['J:0.37', 'text-[#d427dc]']]}
        />
      </div>
      <div className="px-3">
        <KdjChart />
      </div>
      <Ink />
    </main>
  );
}
